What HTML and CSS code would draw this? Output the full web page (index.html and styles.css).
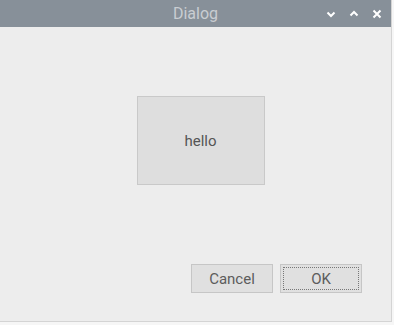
FILE: index.html
```html
<!DOCTYPE html>
<html>
<head>
<meta charset="utf-8">
<link rel="stylesheet" href="styles.css">
</head>
<body>
<div class="window">
  <div class="titlebar">
    <span class="title">Dialog</span>
    <div class="controls">
      <svg class="ctl" width="10" height="8" viewBox="0 0 10 8"><path d="M1.5 2.5 L5 6 L8.5 2.5" fill="none" stroke="#fff" stroke-width="2"/></svg>
      <svg class="ctl" width="10" height="8" viewBox="0 0 10 8"><path d="M1.5 5.5 L5 2 L8.5 5.5" fill="none" stroke="#fff" stroke-width="2"/></svg>
      <svg class="ctl" width="10" height="10" viewBox="0 0 10 10"><path d="M1.5 1.5 L8.5 8.5 M8.5 1.5 L1.5 8.5" fill="none" stroke="#fff" stroke-width="2"/></svg>
    </div>
  </div>
  <div class="content">
    <div class="center">
      <div class="hello">hello</div>
    </div>
    <div class="buttons">
      <button class="btn">Cancel</button>
      <button class="btn focus"><span class="focusring">OK</span></button>
    </div>
  </div>
</div>
</body>
</html>
```
FILE: styles.css
```css
html, body {
  margin: 0;
  padding: 0;
  background: #f6f6f6;
  font-family: Roboto, "Liberation Sans", sans-serif;
}
.window {
  width: 391px;
  height: 321px;
  background: #ededed;
  border-right: 1px solid #d4d4d4;
  border-bottom: 1px solid #d4d4d4;
  display: flex;
  flex-direction: column;
}
.titlebar {
  height: 27px;
  background: #879099;
  display: flex;
  align-items: center;
  justify-content: center;
  position: relative;
  flex: none;
}
.title {
  color: #c9cdd2;
  font-size: 16px;
}
.controls {
  position: absolute;
  right: 9px;
  top: 0;
  height: 27px;
  display: flex;
  align-items: center;
  gap: 13px;
}
.ctl { display: block; }
.content {
  flex: 1;
  display: flex;
  flex-direction: column;
}
.center {
  display: flex;
  justify-content: center;
  padding-top: 69px;
  padding-left: 10px;
}
.hello {
  width: 126px;
  height: 87px;
  background: #dedede;
  border: 1px solid #c9c9c9;
  display: flex;
  align-items: center;
  justify-content: center;
  color: #555;
  font-size: 15px;
}
.buttons {
  display: flex;
  justify-content: flex-end;
  gap: 7px;
  padding-top: 79px;
  padding-right: 29px;
}
.btn {
  width: 82px;
  height: 29px;
  background: #e0e0e0;
  border: 1px solid #c6c6c6;
  font-family: Roboto, "Liberation Sans", sans-serif;
  font-size: 15px;
  color: #5c5c5c;
  padding: 2px;
  margin: 0;
  display: flex;
}
.focusring {
  flex: 1;
  display: flex;
  align-items: center;
  justify-content: center;
  border: 1px dotted #777;
}
.btn:not(.focus) {
  align-items: center;
  justify-content: center;
}
```
